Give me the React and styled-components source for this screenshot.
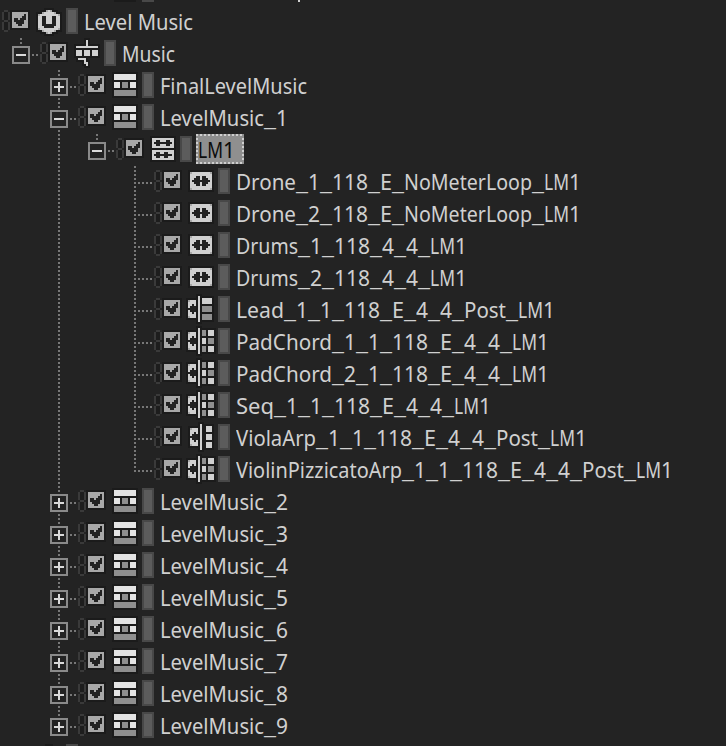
import React from "react";
import styled, { createGlobalStyle, css } from "styled-components";

const GlobalStyle = createGlobalStyle`
  html, body { margin: 0; padding: 0; background: #232323; }
  body { overflow: hidden; }
`;

const FONT = '"Noto Sans", "Open Sans", sans-serif';

const Tree = styled.main`
  width: 726px;
  height: 746px;
  overflow: hidden;
  background: #232323;
  color: #d0d0d0;
  font: 400 22px/30px ${FONT};
`;

const Row = styled.div`
  display: flex;
  align-items: flex-start;
  height: 32px;
  padding-left: ${(p) => (p.$depth === 0 ? 2 : 12)}px;
  white-space: nowrap;
`;

const verticalDots = "repeating-linear-gradient(to bottom, #777 0 2px, transparent 2px 4px)";

const Guide = styled.div`
  flex: none;
  width: 38px;
  height: 32px;
  background: ${verticalDots} 8px 0 / 2px ${(p) => (p.$on ? 32 : 0)}px no-repeat;
`;

const Branch = styled.div`
  flex: none;
  box-sizing: border-box;
  width: 28px;
  height: 32px;
  padding-top: 8px;
  background:
    ${verticalDots} 8px 0 / 2px ${(p) => (p.$last ? 18 : 32)}px no-repeat,
    repeating-linear-gradient(to right, #777 0 2px, transparent 2px 4px) 12px 16px / 14px 2px no-repeat;
`;

const Expander = styled.div`
  box-sizing: border-box;
  width: 18px;
  height: 18px;
  border: 2px solid #8a8a8a;
  box-shadow: 2px 0 #232323;
  background:
    linear-gradient(#dadada, #dadada) 2px 6px / 10px 2px no-repeat,
    linear-gradient(#dadada, #dadada) 6px 2px / 2px ${(p) => (p.$open ? 0 : 10)}px no-repeat,
    #232323;
`;

const ChainSlot = styled.div`
  flex: none;
  width: 8px;
  margin: 4px 2px 0 0;
  line-height: 0;
`;

const CheckSlot = styled.div`
  flex: none;
  width: 16px;
  margin: 6px 8px 0 0;
  line-height: 0;
`;

const IconSlot = styled.div`
  flex: none;
  width: 26px;
  margin: 2px 4px 0 0;
  line-height: 0;
`;

const Pixels = styled.svg`
  overflow: visible;
  shape-rendering: crispEdges;
`;

const Swatch = styled.div`
  flex: none;
  box-sizing: border-box;
  width: 12px;
  height: 26px;
  margin: 2px 4px 0 0;
  border: 2px solid #484848;
  background: #5c5c5c;
`;

const dashX = "repeating-linear-gradient(to right, #cfcfcf 0 2px, #8f8f8f 2px 4px)";
const dashY = "repeating-linear-gradient(to bottom, #cfcfcf 0 2px, #8f8f8f 2px 4px)";

const Label = styled.div`
  display: flex;
  height: 30px;
  padding-left: 2px;
  ${(p) =>
    p.$selected &&
    css`
      width: 46px;
      color: #0c0c0c;
      background:
        ${dashX} 0 0 / 100% 2px no-repeat,
        ${dashX} 0 100% / 100% 2px no-repeat,
        ${dashY} 0 0 / 2px 100% no-repeat,
        ${dashY} 100% 0 / 2px 100% no-repeat,
        #8f8f8f;
    `}
`;

const Run = styled.span`
  display: block;
  flex: none;
  white-space: pre;
  transform-origin: 0 0;
`;

/* Advance of every run of characters in the tree's narrow interface font. */
const RUN_WIDTHS = {
  "Level Music": 109, Music: 53, FinalLevelMusic: 147, LevelMusic: 104,
  LM: 25, Drone: 60, Drums: 62, Lead: 48, PadChord: 96, Seq: 38,
  ViolaArp: 80, ViolinPizzicatoArp: 166, NoMeterLoop: 128, Post: 42, E: 12,
};

const ruler = document.createElement("canvas").getContext("2d");

function TextRun({ text }) {
  const target = RUN_WIDTHS[text] ?? text.length * 12;
  ruler.font = `400 22px ${FONT}`;
  const natural = ruler.measureText(text).width;
  return (
    <Run style={{ marginRight: target - natural, transform: `scaleX(${target / natural})` }}>
      {text}
    </Run>
  );
}

const INK = { "#": "#d0d0d0", W: "#e4e4e4", g: "#8f8f8f", c: "#a8a8a8", k: "#222222", r: "#3a3a3a", d: "#1d1d1d" };

function PixelArt({ art, width, height, shadow = true }) {
  const cells = [];
  art.forEach((line, y) =>
    [...line].forEach((ch, x) => {
      if (ch !== ".") cells.push([x, y, INK[ch]]);
    })
  );
  return (
    <Pixels width={width * 2} height={height * 2} viewBox={`0 0 ${width} ${height}`}>
      {shadow &&
        cells.map(([x, y]) => <rect key={`s${x}-${y}`} x={x - 1} y={y - 1} width="3" height="3" fill="#1b1b1b" />)}
      {cells.map(([x, y, fill]) => (
        <rect key={`${x}-${y}`} x={x} y={y} width="1" height="1" fill={fill} />
      ))}
    </Pixels>
  );
}

const CHAIN = [".rr.", "rddr", "rddr", "rddr", "rddr", ".rr.", "rddr", "rddr", "rddr", "rddr", ".rr."];

const CHECK = [
  "cccccccc",
  "cccccckc",
  "ccccckkc",
  "ckkckkkc",
  "ckkkkkcc",
  "cckkkkcc",
  "ccckkccc",
  "cccccccc",
];

const ICONS = {
  workUnit: [
    "",
    ".....c#c",
    "...c#####c",
    ".c#########c",
    ".##kk###kk##",
    ".##kk###kk##",
    ".##kk###kk##",
    ".##kk###kk##",
    ".##kkkkkkk##",
    ".###kkkkk###",
    ".c#########c",
    "...c#####c",
    ".....c#c",
  ],
  switcher: [
    "......#",
    "......#",
    "......#",
    ".###########",
    "",
    ".###.###.###",
    ".###.###.###",
    ".###.###.###",
    "",
    "..####",
    ".....#",
    ".....##",
    "......#",
  ],
  playlist: [
    "",
    ".WWWWWWWWWWW",
    ".WWWWWWWWWWW",
    ".WWWWWWWWWWW",
    "",
    ".WWW.ggg.WWW",
    ".WWW.ggg.WWW",
    ".WWW.ggg.WWW",
    "",
    ".ggggggggggg",
    ".ggggggggggg",
    ".ggggggggggg",
  ],
  segment: [
    "",
    ".###########",
    ".##kk###kk##",
    ".#kkkkkkkkk#",
    ".##kk###kk##",
    ".###########",
    "",
    ".###########",
    ".##kk##kk###",
    ".#kkkkkkkkk#",
    ".##kk##kk###",
    ".###########",
  ],
  track: [
    "",
    "",
    ".c#########c",
    ".###########",
    ".###kk#kk###",
    ".##kkk#kkk##",
    ".#kkkkkkkkk#",
    ".##kkk#kkk##",
    ".###kk#kk###",
    ".###########",
    ".c#########c",
  ],
  sequence: [
    ".....#",
    ".....#.#####",
    "c###.#.#####",
    "####.#.#####",
    "##k#.#",
    "#kkk.#.ggggg",
    "kkkk.#.ggggg",
    "#kkk.#.ggggg",
    "##k#.#",
    "####.#.ggggg",
    "c###.#.ggggg",
    ".....#.ggggg",
    ".....#",
  ],
  random: [
    ".....#",
    ".....#.gg.###",
    "c###.#.gg.###",
    "####.#.gg.###",
    "##k#.#",
    "#kkk.#.##.ggg",
    "kkkk.#.##.ggg",
    "#kkk.#.##.ggg",
    "##k#.#",
    "####.#.gg.###",
    "c###.#.gg.###",
    ".....#.gg.###",
    ".....#",
  ],
  step: [
    "......#",
    "......#..###",
    ".c###.#..###",
    ".####.#..###",
    ".##k#.#",
    ".#kkk.#..###",
    ".kkkk.#..###",
    ".#kkk.#..###",
    ".##k#.#",
    ".####.#..###",
    ".c###.#..###",
    "......#..###",
    "......#",
  ],
};

const leaf = (icon, text, last = false) => ({ depth: 4, icon, text, last, guides: [false, true, false] });
const list = (text, open = false, last = false) => ({ depth: 2, icon: "playlist", text, open, last, guides: [false] });

const ROWS = [
  { depth: 0, icon: "workUnit", text: "Level Music" },
  { depth: 1, icon: "switcher", text: "Music", open: true, last: true, guides: [] },
  list("FinalLevelMusic"),
  list("LevelMusic_1", true),
  { depth: 3, icon: "segment", text: "LM1", open: true, last: true, selected: true, guides: [false, true] },
  leaf("track", "Drone_1_118_E_NoMeterLoop_LM1"),
  leaf("track", "Drone_2_118_E_NoMeterLoop_LM1"),
  leaf("track", "Drums_1_118_4_4_LM1"),
  leaf("track", "Drums_2_118_4_4_LM1"),
  leaf("sequence", "Lead_1_1_118_E_4_4_Post_LM1"),
  leaf("random", "PadChord_1_1_118_E_4_4_LM1"),
  leaf("random", "PadChord_2_1_118_E_4_4_LM1"),
  leaf("random", "Seq_1_1_118_E_4_4_LM1"),
  leaf("step", "ViolaArp_1_1_118_E_4_4_Post_LM1"),
  leaf("random", "ViolinPizzicatoArp_1_1_118_E_4_4_Post_LM1", true),
  ...[2, 3, 4, 5, 6, 7, 8, 9].map((n) => list(`LevelMusic_${n}`, false, n === 9)),
];

const EdgeTop = styled.div`
  height: 6px;
  background:
    linear-gradient(#1b1b1b, #1b1b1b) 114px 0 / 22px 2px no-repeat,
    linear-gradient(#484848, #484848) 142px 0 / 12px 2px no-repeat,
    linear-gradient(#d0d0d0, #d0d0d0) 298px 0 / 2px 2px no-repeat;
`;

const EdgeBottom = styled.div`
  height: 4px;
  background:
    linear-gradient(#1b1b1b, #1b1b1b) 45px 2px / 8px 2px no-repeat,
    linear-gradient(#484848, #484848) 66px 2px / 12px 2px no-repeat;
`;

function TreeRow({ depth, icon, text, open, last, selected, guides = [] }) {
  const runs = text.match(/_+|\d+|[A-Za-z ]+/g);
  return (
    <Row $depth={depth}>
      {guides.map((on, i) => (
        <Guide key={i} $on={on} />
      ))}
      {depth > 0 && <Branch $last={last}>{depth < 4 && <Expander $open={open} />}</Branch>}
      <ChainSlot>
        <PixelArt art={CHAIN} width={4} height={11} shadow={false} />
      </ChainSlot>
      <CheckSlot>
        <PixelArt art={CHECK} width={8} height={8} />
      </CheckSlot>
      <IconSlot>
        <PixelArt art={ICONS[icon]} width={13} height={13} />
      </IconSlot>
      <Swatch />
      <Label $selected={selected}>
        {runs.map((run, i) => (
          <TextRun key={i} text={run} />
        ))}
      </Label>
    </Row>
  );
}

export default function App() {
  return (
    <>
      <GlobalStyle />
      <Tree>
        <EdgeTop />
        {ROWS.map((row) => (
          <TreeRow key={row.text} {...row} />
        ))}
        <EdgeBottom />
      </Tree>
    </>
  );
}
